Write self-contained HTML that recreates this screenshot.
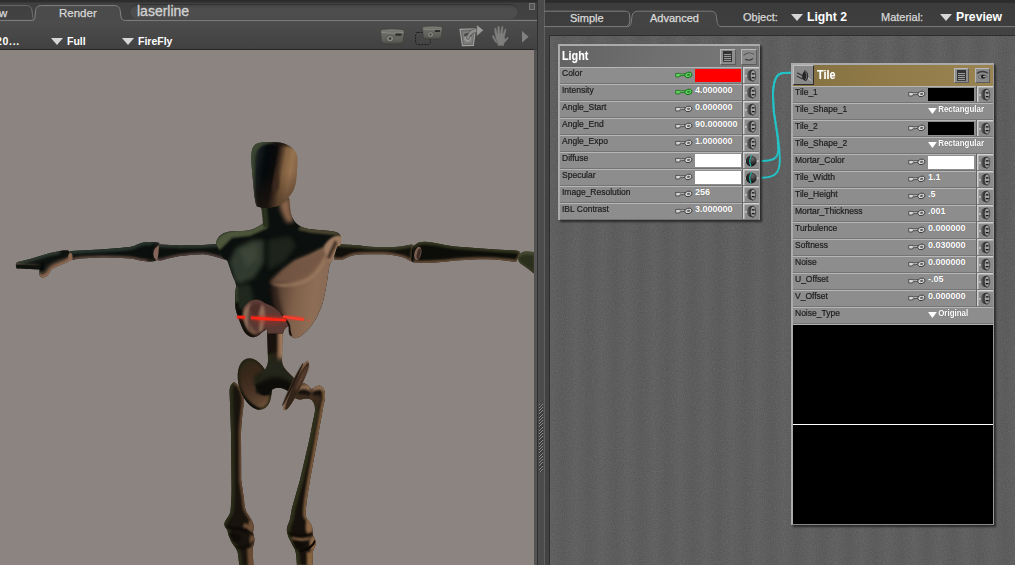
<!DOCTYPE html>
<html><head><meta charset="utf-8"><title>laserline</title>
<style>
html,body{margin:0;padding:0}
body{width:1015px;height:565px;overflow:hidden;background:#454545;position:relative;font-family:"Liberation Sans","DejaVu Sans",sans-serif;}
#left{position:absolute;left:0;top:0;width:538px;height:565px;background:#535353;overflow:hidden;border-right:1px solid #303030;box-sizing:border-box}
.hdr{position:absolute;left:0;top:0;width:538px;height:50px;background:linear-gradient(180deg,#2c2c2c 0px,#2e2e2e 2px,#404040 3px,#424242 20px,#4d4d4d 21px,#494949 30px,#424242 48px,#3e3e3e 49px)}
.topline{display:none}
.pill{position:absolute;left:130px;top:3.6px;width:388px;height:15.4px;border-radius:8px;background:linear-gradient(180deg,#424242 0%,#4e4e4e 35%,#4c4c4c 100%);box-shadow:inset 0 1px 1px #323232}
.doc{position:absolute;left:137px;top:3px;font-size:14px;color:#d2d2d2;-webkit-text-stroke:0.3px #d2d2d2}
.corner{position:absolute;left:529px;top:3px;width:4px;height:5px;border:1px solid #777;background:#555}
.tb{position:absolute;top:34.5px;color:#fff;font-weight:bold;font-size:10.5px;white-space:nowrap}
.tb.a{left:-4px;letter-spacing:0.7px}.tb.b{left:51px}.tb.c{left:122px}
.tri{display:inline-block;width:0;height:0;border-left:4px solid transparent;border-right:4px solid transparent;border-top:6px solid #fff;margin-right:2px;vertical-align:0px}
.tri.big{border-left-width:6px;border-right-width:6px;border-top-width:7px;border-top-color:#d6d6d6;margin-right:4px}
.render{position:absolute;left:0;top:49px;width:534.3px;height:516px;background:#8c8480;overflow:hidden;border-top:1px solid #262626;box-sizing:border-box}
#divider{position:absolute;left:538px;top:0;width:6px;height:565px;background:#4b4b4b}
.grip{position:absolute;left:1px;top:404px;width:4px;height:68px;background:repeating-linear-gradient(135deg,#8c8c8c 0 0.8px,#3c3c3c 0.8px 2.3px)}
#right{position:absolute;left:544px;top:0;width:471px;height:565px;background:linear-gradient(180deg,#2b2b2b 0px,#2d2d2d 2.4px,#3c3c3c 3.4px,#3e3e3e 26px,#444 27px,#424242 36px);overflow:hidden;box-shadow:inset 1px 0 0 #606060}
.olab,.mlab{position:absolute;top:10.6px;font-size:11px;color:#d8d8d8;-webkit-text-stroke:0.25px #d8d8d8}
.olab{left:199px}.mlab{left:337px}
.oval,.mval{position:absolute;top:9.8px;font-size:12.2px;font-weight:bold;color:#fff;white-space:nowrap}
.oval{left:247px}.mval{left:396px}
.canvas{position:absolute;left:5px;top:35px;width:466px;height:530px;background:#666666;border-left:1px solid #2e2e2e;border-top:1px solid #2e2e2e;box-sizing:border-box;background-image:repeating-linear-gradient(90deg,rgba(255,255,255,0.025) 0px,rgba(0,0,0,0.025) 13px,rgba(255,255,255,0.025) 26px)}
.noise{position:absolute;left:0;top:0;opacity:0.15}
.wires{position:absolute;left:-1px;top:-1px}
.node{position:absolute;margin-left:-550px;margin-top:-36px;background:#8d8d8d;box-shadow:2px 2px 2px rgba(0,0,0,0.55);border-top:2px solid #ababab;border-left:2px solid #ababab;border-right:1px solid #9a9a9a;border-bottom:1px solid #8a8a8a;box-sizing:border-box}
.light{border-bottom:none !important}
.ntitle{height:21px;position:relative;background:linear-gradient(100deg,#626262 0%,#707070 50%,#787878 100%);color:#fff;font-weight:bold;font-size:12px;line-height:20px;padding-left:2px;box-sizing:border-box;white-space:nowrap}
.tile .ntitle{height:20.5px;padding-left:24px;background:linear-gradient(100deg,#84703f 0%,#8f7a48 45%,#9a8552 100%)}
.nt{display:inline-block;transform:scaleX(0.9);transform-origin:left center;text-shadow:0 0 1px rgba(255,255,255,0.4)}
.btn{position:absolute;top:2.6px;width:16px;height:16px;background:#8e8e8e;border:1px solid #b8b8b8;border-right-color:#5c5c5c;border-bottom-color:#5c5c5c;box-sizing:border-box}
.tile .btn{top:2.8px;width:15px;height:15px}
.tile .btn.list{right:24px}.tile .btn.eye{right:3px}
.tile .btn.list svg{left:2.4px;top:1.2px}
.btn.list{right:23px}.btn.eye{right:2px;background:#8a8a8a}
.btn svg{position:absolute;left:0;top:0}
.btn.list svg{left:1.8px;top:1.6px}
.row{height:17px;position:relative;box-sizing:border-box;border-top:1px solid #b6b6b6;border-bottom:1px solid #747474;background:#8d8d8d;font-size:9px;color:#1c1c1c}
.lab{position:absolute;left:2.4px;top:0.5px;white-space:nowrap;transform:scaleX(0.945);transform-origin:left center;-webkit-text-stroke:0.2px #1c1c1c}
.key{position:absolute;left:114.6px;top:3.1px}
.val{position:absolute;left:135px;top:-0.2px;color:#fff;font-weight:bold;font-size:9px;text-shadow:0 0 1px rgba(60,60,60,0.6)}
.sw{position:absolute;left:135px;top:1px;width:46px;height:13px}
.plug{position:absolute;right:0;top:-1px}
.dd{position:absolute;left:135.2px;top:0.4px;color:#fff;font-weight:bold;white-space:nowrap;transform:scaleX(0.88);transform-origin:left center;text-shadow:0 0 1px rgba(60,60,60,0.6)}
.dd .tri{border-left-width:5.3px;border-right-width:5.3px;border-top-width:6.6px;margin-right:1.6px;vertical-align:-2px}
.prev{height:199.5px;background:#000;position:relative;border-top:1.5px solid #b0b0b0}
.wl{position:absolute;left:0;right:0;top:99px;height:1px;background:#fff}
.ticon{position:absolute;left:0;top:0;width:20.5px;height:19.6px;background:#8a8a8a;border-top:1px solid #bdbdbd;border-left:1px solid #bdbdbd;border-right:1.5px solid #2e2e2e;border-bottom:1.5px solid #2e2e2e;box-sizing:border-box}

.tabl{position:absolute;top:6.6px;font-size:11.5px;color:#d8d8d8;white-space:nowrap;-webkit-text-stroke:0.25px #d8d8d8}
.tabl.t0{left:-1px}
.tabl.t1{left:59px}
.rtabl{position:absolute;top:11.5px;font-size:11px;color:#dcdcdc;white-space:nowrap;-webkit-text-stroke:0.25px #dcdcdc}
.rtabl.s{left:26px}.rtabl.adv{left:106px}

.light .lab{top:-0.2px}
.tile .val{top:0.8px}
.light .key{top:2.6px}

</style></head>
<body>
<svg width="0" height="0" style="position:absolute"><defs>
<linearGradient id="gSock" x1="0" y1="0" x2="1" y2="0"><stop offset="0" stop-color="#7c7c7c"/><stop offset="0.4" stop-color="#444"/><stop offset="1" stop-color="#161616"/></linearGradient>
<radialGradient id="gBall" cx="0.62" cy="0.3" r="0.8"><stop offset="0" stop-color="#6a6a6a"/><stop offset="0.5" stop-color="#2c2c2c"/><stop offset="1" stop-color="#0c0c0c"/></radialGradient>
</defs></svg>
<div id="left">
  <div class="hdr">
    <div class="topline"></div>
    <div class="pill"></div>
    <svg class="tabs" width="538" height="24" viewBox="0 0 538 24" style="position:absolute;left:0;top:0">
      <path d="M0 5.6 L26 5.6 C30.5 5.6 31.6 8 32 11 L32.6 16 C32.9 18.6 33.2 19.8 34 20.4" fill="none" stroke="#6c6c6c" stroke-width="1"/>
      <path d="M33 20.9 C34.6 20.2 35 18 35.2 15 L35.6 10.6 C36 7.4 37.6 5.6 41.6 5.6 L114 5.6 C118.4 5.6 119.8 7.6 120.2 10.6 L120.8 16 C121.2 19 122.4 20.9 125.4 20.9 Z" fill="#4b4b4b"/>
      <path d="M0 20.4 L33 20.4 C34.6 20.2 35 18 35.2 15 L35.6 10.6 C36 7.4 37.6 5.6 41.6 5.6 L114 5.6 C118.4 5.6 119.8 7.6 120.2 10.6 L120.8 16 C121.2 19 122.4 20.4 125.4 20.4 L538 20.4" fill="none" stroke="#828282" stroke-width="1"/>
    </svg>
    <div class="tabl t0">w</div>
    <div class="tabl t1">Render</div>
    <div class="doc">laserline</div>
    <div class="corner"></div>
    <div class="tb a">20...</div>
    <div class="tb b"><b class="tri big"></b>Full</div>
    <div class="tb c"><b class="tri big"></b>FireFly</div>
    <svg class="icons" width="538" height="50" viewBox="0 0 538 50" style="position:absolute;left:0;top:0">
<defs>
  <linearGradient id="gCam" x1="0" y1="0" x2="0" y2="1"><stop offset="0" stop-color="#868780"/><stop offset="0.22" stop-color="#6c6d66"/><stop offset="0.75" stop-color="#5e5f59"/><stop offset="1" stop-color="#474843"/></linearGradient>
  <g id="cam">
    <path d="M1.6 3.2 C1.2 1.6 2.4 0.8 4 0.7 C8 0 16 0 20 0.7 C22 0.8 23.2 1.6 23 3.2 L22 11.6 C21.6 13.8 20.4 14.8 18.4 15 C14 15.6 10 15.6 5.6 15 C3.8 14.8 2.8 13.8 2.4 11.6 Z" fill="url(#gCam)" stroke="#3a3a36" stroke-width="0.6"/>
    <path d="M2.2 3.4 C8 4.6 17 4.6 22.6 3.4" fill="none" stroke="#9c9d96" stroke-width="0.8" opacity="0.7"/>
    <circle cx="10.2" cy="9.8" r="3.1" fill="#8d8e88" stroke="#4a4a46" stroke-width="0.7"/>
    <circle cx="10.2" cy="9.8" r="1.3" fill="#3a3a38"/>
    <rect x="15" y="4.6" width="5.4" height="2.4" rx="0.6" fill="#2c2c2a"/>
  </g>
</defs>
<g transform="translate(378.7 28.8) scale(1.115 1)"><use href="#cam"/></g>
<rect x="415.6" y="32.4" width="14.8" height="12.2" rx="2.4" fill="none" stroke="#151515" stroke-width="1" stroke-dasharray="1.6 1.3"/>
<g transform="translate(421 26) scale(0.93 0.87)"><use href="#cam"/></g>
<!-- export -->
<path d="M460 29.4 L475.4 28.8 L473.4 45.4 L462.4 45.6 Z" fill="#6c6c6a" stroke="#a2a2a0" stroke-width="1.1"/>
<path d="M462.4 31.4 L473.6 31 L472 43.6 L464 43.8 Z" fill="#7e7e7c"/>
<ellipse cx="467.6" cy="37.6" rx="3.4" ry="4.4" fill="#9a9a98"/>
<path d="M464 34.6 C466 32.6 470 32.6 471.6 34.8 L471 37 C469 35 466.6 35 464.4 37 Z" fill="#4a4a48"/>
<path d="M466.4 38.6 C467.6 31.6 472 28.4 477.6 28.4 L477.6 32.6 C473 32.6 470 34.4 468.8 39.6 Z" fill="#8e8e8c" stroke="#3a3a3a" stroke-width="0.5"/>
<path d="M476.6 24.4 L483.6 30.2 L476.6 36.4 Z" fill="#9a9a98" stroke="#3a3a3a" stroke-width="0.5"/>
<!-- hand -->
<g fill="#7e7e7c" stroke="#5a5a58" stroke-width="0.4">
<path d="M495.4 36 C494.6 33 494.2 30.6 494.4 28.6 C494.6 27.4 496 27.4 496.3 28.6 L497.4 34 L497.6 27 C497.6 25.6 499.4 25.6 499.6 27 L500.2 33.6 L501.4 26.8 C501.6 25.6 503.2 25.8 503.2 27.2 L502.8 34 L504.6 29.4 C505 28.2 506.4 28.6 506.2 30 L504.8 36.6 C504.6 38.6 504.8 39.4 506 38.4 L507.4 37.2 C508.2 36.6 509 37.4 508.4 38.2 C507 40.2 505.6 42 504 43.4 L504 45.8 L497.6 45.8 L497.6 43.6 C496.4 41.6 495.8 38.6 495.4 36 Z"/>
<path d="M492.2 36.4 C492 35.2 493.4 34.8 494 35.8 L496.4 40.4 L497.6 43.6 L496 43 C494.4 41 493 38.8 492.2 36.4 Z"/>
</g>
<path d="M522 31 L528.6 36.8 L522 42.8 Z" fill="#808080"/>
</svg>

  </div>
  <div class="render">
<svg class="fig" width="534" height="516" viewBox="0 49 534 516" style="position:absolute;left:0;top:-1px">
<defs>
  <filter id="b1" color-interpolation-filters="sRGB" x="-20%" y="-20%" width="140%" height="140%"><feGaussianBlur color-interpolation-filters="sRGB" stdDeviation="1"/></filter>
  <filter id="b2" color-interpolation-filters="sRGB" x="-20%" y="-20%" width="140%" height="140%"><feGaussianBlur color-interpolation-filters="sRGB" stdDeviation="2"/></filter>
  <filter id="b3" color-interpolation-filters="sRGB" x="-30%" y="-30%" width="160%" height="160%"><feGaussianBlur color-interpolation-filters="sRGB" stdDeviation="3.5"/></filter>
  <filter id="b5" color-interpolation-filters="sRGB" x="-30%" y="-30%" width="160%" height="160%"><feGaussianBlur color-interpolation-filters="sRGB" stdDeviation="5"/></filter>
  <filter id="b07" color-interpolation-filters="sRGB" x="-20%" y="-20%" width="140%" height="140%"><feGaussianBlur color-interpolation-filters="sRGB" stdDeviation="0.7"/></filter>
  <filter id="soft" color-interpolation-filters="sRGB" x="-5%" y="-5%" width="110%" height="110%"><feGaussianBlur color-interpolation-filters="sRGB" stdDeviation="0.45"/></filter>
  <linearGradient id="gHead" x1="251" y1="168" x2="298" y2="176" gradientUnits="userSpaceOnUse">
    <stop offset="0" stop-color="#2c3428"/><stop offset="0.14" stop-color="#10181a"/><stop offset="0.28" stop-color="#04090b"/><stop offset="0.47" stop-color="#0a0a0a"/><stop offset="0.56" stop-color="#3e2c20"/><stop offset="0.67" stop-color="#80603f"/><stop offset="0.82" stop-color="#96724f"/><stop offset="1" stop-color="#7e5e44"/>
  </linearGradient>
  <linearGradient id="gHeadB" x1="0" y1="172" x2="0" y2="208" gradientUnits="userSpaceOnUse">
    <stop offset="0" stop-color="#2a1c14" stop-opacity="0"/><stop offset="1" stop-color="#2a1c14" stop-opacity="0.55"/>
  </linearGradient>
  <linearGradient id="gArmL" x1="0" y1="243" x2="0" y2="262" gradientUnits="userSpaceOnUse">
    <stop offset="0" stop-color="#2c3424"/><stop offset="0.25" stop-color="#0e1410"/><stop offset="0.7" stop-color="#0d100d"/><stop offset="0.9" stop-color="#5a4535"/><stop offset="1" stop-color="#a07a62"/>
  </linearGradient>
  <linearGradient id="gArmR" x1="0" y1="242" x2="0" y2="263" gradientUnits="userSpaceOnUse">
    <stop offset="0" stop-color="#3f4430"/><stop offset="0.3" stop-color="#1a1e14"/><stop offset="0.7" stop-color="#0d0f0b"/><stop offset="0.9" stop-color="#4a3a2c"/><stop offset="1" stop-color="#9a7860"/>
  </linearGradient>
  <linearGradient id="gLegL" x1="229" y1="0" x2="246" y2="0" gradientUnits="userSpaceOnUse">
    <stop offset="0" stop-color="#2c3020"/><stop offset="0.35" stop-color="#15140e"/><stop offset="0.7" stop-color="#3a2a1e"/><stop offset="1" stop-color="#7a5a42"/>
  </linearGradient>
  <linearGradient id="gLegR" x1="0" y1="0" x2="1" y2="0.15">
    <stop offset="0" stop-color="#3a3a22"/><stop offset="0.3" stop-color="#14120c"/><stop offset="0.65" stop-color="#2a1c14"/><stop offset="1" stop-color="#8a6246"/>
  </linearGradient>
  <linearGradient id="gSpine" x1="267" y1="0" x2="283" y2="0" gradientUnits="userSpaceOnUse">
    <stop offset="0" stop-color="#2c2c1a"/><stop offset="0.35" stop-color="#242416"/><stop offset="0.55" stop-color="#2a2016"/><stop offset="0.72" stop-color="#7e5c44"/><stop offset="0.9" stop-color="#a07a5c"/><stop offset="1" stop-color="#7a5a44"/>
  </linearGradient>
  <linearGradient id="gLit" x1="272" y1="292" x2="328" y2="300" gradientUnits="userSpaceOnUse">
    <stop offset="0" stop-color="#3e2c24"/><stop offset="0.15" stop-color="#5e4536"/><stop offset="0.4" stop-color="#7e604a"/><stop offset="0.75" stop-color="#8e6e55"/><stop offset="0.93" stop-color="#886a56"/><stop offset="1" stop-color="#a07850"/>
  </linearGradient>
  <linearGradient id="gDiscL" x1="240" y1="362" x2="270" y2="406" gradientUnits="userSpaceOnUse">
    <stop offset="0" stop-color="#2a2818"/><stop offset="0.25" stop-color="#38271a"/><stop offset="0.6" stop-color="#4a3426"/><stop offset="0.85" stop-color="#5e4430"/><stop offset="1" stop-color="#80603f"/>
  </linearGradient>
  <clipPath id="cHead"><path id="pHead" d="M257 206.6 C255.5 204 254.6 198 254 192 L251.6 166 C250.6 154 251.5 147 256 144 C260 142 266 141.8 272 142 C279 142.2 284 143 288 145.2 C294 148.5 297.6 153 297.6 160 L297 172 C296.4 181 295.5 186 293.5 190 C291.5 194 289.5 196.5 287 199 C283.5 203 279.5 205.5 276 206.6 C270 208.3 262 208.6 257 206.6 Z"/></clipPath>
  <clipPath id="cTorso"><path id="pTorso" d="M216 244 C216.5 240 218 236.5 223 233.5 C227 231.5 232 231 238 231 C244 231 248 231 252 229.6 C256 228 260 226 263.5 223 L262.4 212 L261 207 L289 198 L290 208 C290.5 214 292 218.5 296 223 C299 226 303 228 309 229 C318 230 328 230.5 334 231.6 C339 232.8 341 235 341 238 L340.6 245 L337 246.6 C335.6 252 333 259 329.6 264.5 C328.6 270 327.8 276 327 282 C326 288 325 293 323.8 298 C322.8 303 321.5 307 319.6 311 C318 315 316 319 313.5 322.5 C311 326.5 308.5 329.5 305.6 332 C303 334.5 300.5 336.5 297.6 337.8 C294.5 338.8 291.6 337.6 290 335.6 C288.6 334 288.8 331 288.7 327 L286.6 327 C284.6 329 283.4 331 283 333.5 L267.2 333.5 L267 329 C265.6 329.8 264.4 330.6 263 331.6 C261.4 333 259.6 334.6 258 335.6 C256 337 253.6 337.4 251.5 337 C249 336.4 246.6 334.6 245 332.5 C243 329.6 241.4 326 240 322 C238.2 317.6 236.4 313 235.6 309 C235 303.6 235 299 235 295 C235 291.6 236.4 288 236 285 C235.4 281.4 234 279 232.6 276 C231 272 229.6 267 228 262.6 C227.4 260 225.4 259 223 258 Z"/></clipPath>
  <linearGradient id="gLaser" x1="237" y1="0" x2="312" y2="0" gradientUnits="userSpaceOnUse">
    <stop offset="0" stop-color="#ff2a18"/><stop offset="0.85" stop-color="#ff2a18"/><stop offset="1" stop-color="#ff2a18" stop-opacity="0"/>
  </linearGradient>
</defs>
<g filter="url(#soft)">
<!-- left arm -->
<defs><path id="upL" d="M155 247 C156.6 245.6 158 244.8 160 244.6 C167 244.8 174 245.2 180 245.4 C188 245.4 196 245.2 203 245 L218 244 L226 260 C217 257 210 254.8 203 254.2 C196 254.4 188 255 180 256 C175 256.8 170 258 166 259 C164 259.8 162 260.4 160 260.6 C157.6 260.4 155.6 259.4 155 258 C154.2 255 154.2 250 155 247 Z"/>
<clipPath id="c_upL"><use href="#upL"/></clipPath>
<mask id="mt_upL" maskUnits="userSpaceOnUse" x="0" y="230" width="540" height="60"><rect x="0" y="230" width="540" height="60" fill="#fff"/><use href="#upL" transform="translate(0 3)" fill="#000" filter="url(#b1)"/></mask>
<mask id="mb_upL" maskUnits="userSpaceOnUse" x="0" y="230" width="540" height="60"><rect x="0" y="230" width="540" height="60" fill="#fff"/><use href="#upL" transform="translate(0 -2.0)" fill="#000" filter="url(#b1)"/></mask></defs>
<g clip-path="url(#c_upL)">
  <rect x="0" y="230" width="540" height="60" fill="#0c100d"/>
  <rect x="0" y="230" width="540" height="60" fill="#2a342c" mask="url(#mt_upL)"/>
  <rect x="0" y="230" width="540" height="60" fill="#54403a" mask="url(#mb_upL)"/>
</g>
<path d="M158.8 244.6 C156 247 154.4 248.6 154 250 C153.2 252 153 254 153.4 256 C154 258 155 259.4 156.6 260.6 C158.4 258 159 250 158.8 244.6 Z" fill="#846558"/>
<defs><path id="foL" d="M69 253 C69.4 251.6 70 251 71 251 L100 249.4 L120 248 C126 247.4 130 247 134 246 C136.6 245 138 244.2 140 243.6 C143 242.4 145.6 242 148 242 C152 241.8 156 242 158.6 242.8 C159.6 243.4 159.4 244.2 158.6 245 C156 247 154.4 248.6 154 250 C153.2 252 153 254 153.4 256 C154 258 155 259.4 156.4 260.4 C154 261.2 151 261.6 148 261.4 C145 261.2 142.6 261 140 260.6 C136 259.6 133 259 130 258.6 C120 257.8 110 257.4 100 257.6 C93 257.8 86 258.2 80 258.6 C77 259 74.6 259.6 72.4 260 C70.4 260.2 69.4 259.4 69 258 Z"/>
<clipPath id="c_foL"><use href="#foL"/></clipPath>
<mask id="mt_foL" maskUnits="userSpaceOnUse" x="0" y="230" width="540" height="60"><rect x="0" y="230" width="540" height="60" fill="#fff"/><use href="#foL" transform="translate(0 3.2)" fill="#000" filter="url(#b1)"/></mask>
<mask id="mb_foL" maskUnits="userSpaceOnUse" x="0" y="230" width="540" height="60"><rect x="0" y="230" width="540" height="60" fill="#fff"/><use href="#foL" transform="translate(0 -2.1)" fill="#000" filter="url(#b1)"/></mask></defs>
<g clip-path="url(#c_foL)">
  <rect x="0" y="230" width="540" height="60" fill="#0b0f0d"/>
  <rect x="0" y="230" width="540" height="60" fill="#27332c" mask="url(#mt_foL)"/>
  <rect x="0" y="230" width="540" height="60" fill="#5e483c" mask="url(#mb_foL)"/>
  <path d="M146 262 C150 256 152 250 152.4 243 L160 243 L158 262 Z" fill="#0a0c0a" filter="url(#b1)" opacity="0.7"/>
</g>
<defs><path id="haL" d="M69 251.4 C68 250.6 67.6 250.6 67 250.6 C65 250.6 62.6 250.6 60 251 C56.6 251.6 53.4 252.2 50 253 C46.6 254 43.4 255 40 256 L30 259 L20 261.6 C18 262 16.8 262.4 16.4 263 C15.8 264 15.8 265 16 266 C16.2 267.4 16.6 268.2 17 268.6 C21 269 26 269 30 269 C33.4 269.2 36.6 269.4 40 269.4 C39.4 270.6 39 271.8 39 273 C39 274.6 40 276.2 41 277 C42 277.8 43 277.8 44 277.6 C45.6 277 47 276.2 48 275 C49.2 273.4 50 271.6 51 270 C53 268.4 55.6 267.2 58 266 C61.6 264.4 65.4 263 69 261.4 C70 258 70 254.4 69 251.4 Z"/>
<clipPath id="c_haL"><use href="#haL"/></clipPath>
<mask id="mt_haL" maskUnits="userSpaceOnUse" x="0" y="230" width="540" height="60"><rect x="0" y="230" width="540" height="60" fill="#fff"/><use href="#haL" transform="translate(0.8 3)" fill="#000" filter="url(#b1)"/></mask>
<mask id="mb_haL" maskUnits="userSpaceOnUse" x="0" y="230" width="540" height="60"><rect x="0" y="230" width="540" height="60" fill="#fff"/><use href="#haL" transform="translate(-1.8 -3.0)" fill="#000" filter="url(#b2)"/></mask></defs>
<g clip-path="url(#c_haL)">
  <rect x="0" y="230" width="540" height="60" fill="#0d120f"/>
  <rect x="0" y="230" width="540" height="60" fill="#2c362e" mask="url(#mt_haL)"/>
  <rect x="0" y="230" width="540" height="60" fill="#9a7258" mask="url(#mb_haL)"/>
  <path d="M14 264.6 L41 265.4 L41 271 L14 271 Z" fill="#0d120f" filter="url(#b07)"/>
  <path d="M60 249 L71 249 L71 256.6 L60 258 Z" fill="#0d120f" filter="url(#b1)"/>
  <path d="M42.6 262 L43.8 262 L43.4 270 L40 270 Z" fill="#060806" filter="url(#soft)"/>
</g>
<ellipse cx="70.4" cy="257" rx="2.2" ry="4" fill="#8a6650" filter="url(#b07)"/>
<!-- right arm -->
<defs><path id="upR" d="M334 244 L345 244.4 C349 244.6 352 244.8 355 245 C358.6 245.4 362 245.8 365 246.2 C368.4 246.6 371.6 246.9 375 247 L387 247 C392 246.9 397 246.7 401 246.4 C404 246 406.6 245.4 409 245 C410.6 244.8 412 244.8 413 245 C413.6 245.6 413.6 246.4 413.4 247 C412.4 249.6 411.4 252 411 255 C410.8 257.2 411 259.4 411.6 261.4 C409.4 260.6 407 259.2 405 258 C401.6 257 398.4 256.2 395 255.6 C391.6 255 388.4 254.5 385 254.2 L365 254.2 C361.6 254.4 358.4 254.6 355 255 C352 255.6 349.4 256.4 347 257.4 C345 258.4 343 259.4 341 260 L334 260 Z"/>
<clipPath id="c_upR"><use href="#upR"/></clipPath>
<mask id="mt_upR" maskUnits="userSpaceOnUse" x="0" y="230" width="540" height="60"><rect x="0" y="230" width="540" height="60" fill="#fff"/><use href="#upR" transform="translate(0 2.8)" fill="#000" filter="url(#b1)"/></mask>
<mask id="mb_upR" maskUnits="userSpaceOnUse" x="0" y="230" width="540" height="60"><rect x="0" y="230" width="540" height="60" fill="#fff"/><use href="#upR" transform="translate(0 -2.2)" fill="#000" filter="url(#b1)"/></mask></defs>
<g clip-path="url(#c_upR)">
  <rect x="0" y="230" width="540" height="60" fill="#100f0a"/>
  <rect x="0" y="230" width="540" height="60" fill="#3a3b25" mask="url(#mt_upR)"/>
  <rect x="0" y="230" width="540" height="60" fill="#6a503c" mask="url(#mb_upR)"/>
</g>
<defs><path id="foR" d="M412 250 C412.6 248 413.6 246.4 415 245 C416.2 243.8 417.6 243 419 242.6 C421 242 423 241.8 425 241.8 C428.4 242 431.6 242.4 435 243 L445 245 C448.4 245.6 451.6 246.1 455 246.4 L475 248 L495 249.4 L515 250.6 C516.6 250.8 518 251 519 251.4 C520 252 520.4 253 520 254 L516 262 C512.4 261.4 508.6 261 505 260.6 C501.6 260.2 498.4 259.8 495 259.6 C488.4 259.4 481.6 259.3 475 259.4 C468.4 259.6 461.6 260 455 260.6 C449.6 261.2 444.4 261.8 439 262.2 C434.4 262.6 429.6 263 425 263 C421.6 263 418.4 262.9 415 262.6 C413.6 262.4 412.4 261.8 411.6 261 C411.2 257.4 411.4 253.6 412 250 Z"/>
<clipPath id="c_foR"><use href="#foR"/></clipPath>
<mask id="mt_foR" maskUnits="userSpaceOnUse" x="0" y="230" width="540" height="60"><rect x="0" y="230" width="540" height="60" fill="#fff"/><use href="#foR" transform="translate(0 2.6)" fill="#000" filter="url(#b1)"/></mask>
<mask id="mb_foR" maskUnits="userSpaceOnUse" x="0" y="230" width="540" height="60"><rect x="0" y="230" width="540" height="60" fill="#fff"/><use href="#foR" transform="translate(0 -2.2)" fill="#000" filter="url(#b1)"/></mask></defs>
<g clip-path="url(#c_foR)">
  <rect x="0" y="230" width="540" height="60" fill="#0c0d09"/>
  <rect x="0" y="230" width="540" height="60" fill="#33351f" mask="url(#mt_foR)"/>
  <rect x="0" y="230" width="540" height="60" fill="#6a503a" mask="url(#mb_foR)"/>
  <ellipse cx="417.8" cy="253.4" rx="3.4" ry="6.8" fill="#7a5e52" transform="rotate(14 417.8 253.4)"/>
  <ellipse cx="418.8" cy="253.8" rx="1.8" ry="5.4" fill="#3a2a22" transform="rotate(14 418.8 253.8)" filter="url(#soft)"/>
  <path d="M411 246 C413 243 415 242 417 241.6 C414.6 244 413.4 248 413 252 C412.6 256 413 260 414 263 L411 263 Z" fill="#090a07" filter="url(#soft)"/>
</g>
<defs><path id="haR" d="M518 257 C518.8 255.4 519.8 254 521 253 C522.2 252.2 523.6 251.8 525 251.6 C528 251.4 531 251.6 534 252 L534 273.4 C531.6 271.6 529.4 269.8 527 268 C524.6 266.4 522 264.8 520 263 C518.6 261.4 518 259 518 257 Z"/>
<clipPath id="c_haR"><use href="#haR"/></clipPath>
<mask id="mt_haR" maskUnits="userSpaceOnUse" x="0" y="230" width="540" height="60"><rect x="0" y="230" width="540" height="60" fill="#fff"/><use href="#haR" transform="translate(0 3)" fill="#000" filter="url(#b1)"/></mask>
<mask id="mb_haR" maskUnits="userSpaceOnUse" x="0" y="230" width="540" height="60"><rect x="0" y="230" width="540" height="60" fill="#fff"/><use href="#haR" transform="translate(0 -2)" fill="#000" filter="url(#b1)"/></mask></defs>
<g clip-path="url(#c_haR)">
  <rect x="0" y="230" width="540" height="60" fill="#2a2e1c"/>
  <rect x="0" y="230" width="540" height="60" fill="#454a30" mask="url(#mt_haR)"/>
  <rect x="0" y="230" width="540" height="60" fill="#3a3a26" mask="url(#mb_haR)"/>
</g>
<!-- legs -->
<defs><path id="legL" d="M234 382 C231 384 229.6 387 229.6 391 C229.8 400 230.6 415 231 433 L231.6 490 C231.6 498 231 506 230.4 512 C229 517 224.6 520 224.4 524 C224.6 527 226 528.4 227.4 530 C228 533 228.6 535.6 229.8 538 C231 541.6 233 544.6 235 547 C236.4 549 237.6 551 238 554 L239.4 566 L253.4 566 L252.6 548 C253.6 545 254.6 542 254.4 538.6 C254.2 536 253 534.4 253 532 C253.6 529 254 526 253 523 C251.6 519 248 515 246 511 C244.6 507 244.2 503 244 499 L241.2 480 L241 433 C241.6 420 243 410 244 402 C244 394 241 386 234 382 Z"/>
<path id="legR" d="M294.2 391.5 C295.4 389 296.6 387.2 298 386 C300 384.2 302.4 383.4 304.5 383.5 C306.4 383.8 307.6 385 308.5 386 C309.6 387.6 310.6 388.8 311.7 389 C313 388.8 314.4 387.4 315.7 386.7 C317.2 386 319 385.6 320.5 386 C322.6 386.8 324 388.6 324.5 390.7 C325 393 325.2 395.6 325 398 C324.8 400 324.4 402 323.7 404 C323.2 407 322.6 410 322 414 L319.7 426.5 L318.6 433 L310 480 C308.4 490 306.6 500 306 508 C305.6 512 305.6 515 306.4 518 C308 521 311 523 312 526.6 C312.6 530 312.6 533 313.2 536 C314.4 538.6 316 540.6 315.8 543.4 C315.4 546.6 313.4 548.6 313 551.6 L312.4 566 L297 566 C296.6 560 296.4 554 295 549.6 C293.6 546.6 292 544.6 291 542 C289.6 539 288 537 287.6 534 C287 531.6 286.6 530 287 528 C287.6 525 289 522.6 289.8 520 C290.6 516 291.4 512 292 508 L300 480 L309.3 440 L312.5 423.4 C313.6 418 314.8 414 315 410.6 C315 407 314.8 405 314 403.4 C313 401 312 400 311 399.4 C309.4 398.6 307.6 398.4 306 398.6 C304 399 301.6 399.6 299.7 399.4 C298 399.2 296.4 398.8 295 398 Z"/></defs>
<clipPath id="cLegL"><use href="#legL"/></clipPath>
<clipPath id="cLegR"><use href="#legR"/></clipPath>
<mask id="mLegL" maskUnits="userSpaceOnUse" x="215" y="375" width="50" height="195"><rect x="215" y="375" width="50" height="195" fill="#fff"/><use href="#legL" transform="translate(3.4 0)" fill="#000" filter="url(#b1)"/></mask>
<mask id="mLegLr" maskUnits="userSpaceOnUse" x="215" y="375" width="50" height="195"><rect x="215" y="375" width="50" height="195" fill="#fff"/><use href="#legL" transform="translate(-2.2 0)" fill="#000" filter="url(#b1)"/></mask>
<mask id="mLegR" maskUnits="userSpaceOnUse" x="280" y="375" width="50" height="195"><rect x="280" y="375" width="50" height="195" fill="#fff"/><use href="#legR" transform="translate(3.6 0.6)" fill="#000" filter="url(#b1)"/></mask>
<mask id="mLegRr" maskUnits="userSpaceOnUse" x="280" y="375" width="50" height="195"><rect x="280" y="375" width="50" height="195" fill="#fff"/><use href="#legR" transform="translate(-2.8 -0.6)" fill="#000" filter="url(#b1)"/></mask>
<g clip-path="url(#cLegL)">
  <rect x="215" y="375" width="50" height="195" fill="#18130d"/>
  <rect x="215" y="375" width="50" height="195" fill="#2a2b19" mask="url(#mLegL)"/>
  <rect x="215" y="375" width="50" height="195" fill="#664a33" mask="url(#mLegLr)"/>
  <ellipse cx="250.6" cy="527" rx="2.6" ry="7" fill="#6e5038" filter="url(#b1)"/>
  <ellipse cx="252" cy="540" rx="2.4" ry="6" fill="#6a4c34" filter="url(#b1)"/>
  <path d="M247 548 L254 548 L254 566 L248 566 Z" fill="#6a4c34" filter="url(#b1)"/>
  <!-- knee details -->
  <path d="M226 524 C230 527.4 236 528 240 527 C246 529 250 531 254 533.6 L254 536 C249 533.4 244 531.6 239.6 530.4 C234 531 229 529.6 226 527 Z" fill="#0c0906" filter="url(#b1)"/>
  <path d="M244 523 C248 524 252 527 253.4 531 C250 529.6 247 528 243 527.4 Z" fill="#70523a" filter="url(#b1)"/>
  <path d="M229 532 C233 533 238 533.6 241 536 C242 540 238 543 233.6 542 C231 539 229.6 536 229 532 Z" fill="#0e0b08" filter="url(#b1)"/>
  <path d="M234 545 C240 547.6 248 546 254 540.6 L254.4 543 C249 548.6 240 550 235.6 548 Z" fill="#0e0a07" filter="url(#b1)" opacity="0.8"/>
</g>
<g clip-path="url(#cLegR)">
  <rect x="280" y="375" width="50" height="195" fill="#15100b"/>
  <rect x="280" y="375" width="50" height="195" fill="#2f301b" mask="url(#mLegR)"/>
  <rect x="280" y="375" width="50" height="195" fill="#7a5a3c" mask="url(#mLegRr)"/>
  <!-- trochanter / neck shading -->
  <path d="M293 392 L298 385 L326 384 L326 392 C320 389 316 390 312 392 C308 391 304 388 300 390 Z" fill="#8a6a50" filter="url(#b1)"/>
  <path d="M294 395 C300 393 306 394 311 396 C316 394 320 395 322 398 L318 408 L313 401 L295 400 Z" fill="#3a2a1e" filter="url(#b1)"/>
  <path d="M310 386 L313 386 L313 400 L310 400 Z" fill="#4a3628" filter="url(#b1)" opacity="0.8"/>
  <ellipse cx="309" cy="527" rx="3.4" ry="8" fill="#8a6646" filter="url(#b1)"/>
  <ellipse cx="312.4" cy="543" rx="3" ry="6.4" fill="#8a6646" filter="url(#b1)"/>
  <path d="M306.6 552 L313 552 L313 566 L307 566 Z" fill="#86623f" filter="url(#b1)"/>
  <!-- knee details -->
  <path d="M288 531 C292 534.6 298 535.6 304 534.6 C308 534 311 533 313.4 531.6 L313.6 535 C310 537 305 538 300 537.8 C295 537.6 290.6 536 288 534 Z" fill="#0c0805" filter="url(#b1)"/>
  <path d="M292 536.6 C297 538.8 304 538.8 310 536.8 L310 539.6 C304 541.4 297 541.4 292.6 539.6 Z" fill="#9a7250" filter="url(#b1)" opacity="0.85"/>
  <path d="M293 540 C297 541.6 302 542.4 305 545 C304 549 299 550.6 296 549 C294.4 546 293.4 543 293 540 Z" fill="#0f0b08" filter="url(#b1)"/>
  <path d="M315.6 541 C315 546 308 551.4 299.6 552 L299.4 550 C307 549 312.6 545 314.2 540 Z" fill="#0c0805" filter="url(#soft)"/>
</g>
<!-- left disc -->
<clipPath id="cDiscL"><ellipse cx="254.6" cy="384" rx="15.6" ry="26.5" transform="rotate(-18 254.6 384)"/></clipPath>
<g clip-path="url(#cDiscL)">
  <rect x="230" y="350" width="50" height="70" fill="url(#gDiscL)"/>
  <ellipse cx="254.6" cy="384" rx="15.2" ry="26" transform="rotate(-18 254.6 384)" fill="none" stroke="#1e2012" stroke-width="2.6" filter="url(#b1)"/>
  <path d="M236 380 C240 394 250 404 262 410 L256 412 C244 406 236 394 234 382 Z" fill="#0c0c07" filter="url(#b1)"/>
  <path d="M254 376 C258 372 264 370 270 370 L276 388 C270 390 262 392 258 390 C254 386 253 380 254 376 Z" fill="#1e1f13" filter="url(#b2)"/>
  <path d="M256 388 C262 390 268 390 274 386 L274 394 C268 396 260 396 256 392 Z" fill="#0e0d08" filter="url(#b1)"/>
</g>
<!-- spine & pelvis Y -->
<clipPath id="cY"><path d="M267.2 327 C270 329 274 330 278 329.6 C281 329 284 328 286.6 326.6 C284.4 329 283.2 331 283 333.5 L282 360 C282.2 365 284 368 289 373 L295 379 L288 391 C284 388 278 386.6 272.6 389 C271 393 267 396 263 395 C259 393 256 389 255 384 C259 380 263 374 266 368 C267.6 365 268 363 268 360 L267.2 333 Z"/></clipPath>
<g clip-path="url(#cY)">
  <rect x="250" y="320" width="50" height="80" fill="url(#gSpine)"/>
  <path d="M264 322 L276.6 322 L276 352 L264 356 Z" fill="#18110c" filter="url(#b1)"/>
  <path d="M250 372 L268 360 L284 358 L300 372 L300 400 L250 400 Z" fill="#24251a" filter="url(#b2)"/>
  <path d="M250 386 C258 384 264 380 270 378 C278 376 286 378 296 386 L296 400 L250 400 Z" fill="#0d0c08" filter="url(#b2)"/>
  <path d="M274 344 L284 344 L284 366 L292 376 L286 380 C280 372 275 364 274 344 Z" fill="#15120c" filter="url(#b1)" opacity="0.0"/>
</g>
<!-- right disc -->
<g transform="rotate(26 296 385.5)">
  <ellipse cx="296" cy="385.5" rx="4.9" ry="27.4" fill="#7a5a40"/>
  <ellipse cx="297.4" cy="385.8" rx="3.5" ry="26" fill="#33241a"/>
  <ellipse cx="298" cy="376" rx="2" ry="14" fill="#5a4030" filter="url(#b1)"/>
  <ellipse cx="292.6" cy="386" rx="1.2" ry="24" fill="#1a140e" filter="url(#soft)"/>
</g>
<!-- torso -->
<g clip-path="url(#cTorso)">
  <rect x="210" y="195" width="140" height="150" fill="#0b0f0d"/>
  <!-- left shoulder/trap top band -->
  <path d="M214 247 C215 238 222 231 236 230 L252 229 L264 222 L268 228 L250 236 L232 238 L220 250 Z" fill="#4c543a" filter="url(#b1)"/>
  <!-- left pec -->
  <path d="M229 262 L236 248 L252 240 L264 240 L264 262 L254 278 L240 284 L235 282 Z" fill="#303a2e" filter="url(#b2)"/>
  <path d="M240 250 L256 244 L258 258 L246 268 Z" fill="#3c4638" filter="url(#b2)"/>
  <!-- right pec -->
  <path d="M268 240 L290 236 L296 246 L284 262 L268 270 Z" fill="#1e241c" filter="url(#b2)"/>
  <!-- left abdomen -->
  <path d="M235 286 L250 284 L254 300 L246 312 L240 322 L236 308 Z" fill="#20281e" filter="url(#b2)"/>
  <path d="M234.6 286 L237.6 286 L238 300 L241 320 L238.6 320 L235.6 306 Z" fill="#3a4230" filter="url(#b1)"/>
  <!-- right shoulder top band -->
  <path d="M300 226 L312 228.6 L336 231 L341 236 L334 235 L312 233 L298 230 Z" fill="#4a4630" filter="url(#b1)"/>
  <!-- tan lit -->
  <path d="M326 246.4 L332 238 L344 234 L344 262 L332 266 L330 300 L316 326 L298 342 L284 342 L279 316 L274.6 304 L273.4 296 L272.7 286 L269.4 282.4 L282 270.2 L294.6 260.7 L310 254.4 Z" fill="url(#gLit)" filter="url(#b1)"/>
  <!-- pec lens (slightly darker) -->
  <path d="M269.4 282.4 L282 270.2 L294.6 260.7 L310 254.4 L326 246.4 L326 254 C322 263 316 270 310 275 C300 282 284 284 269.4 282.4 Z" fill="#735644" filter="url(#b2)" opacity="0.9"/>
  <path d="M272 283 C284 285.6 300 283 310 276 C316 271 321 264 324.6 256 L326 262 C322 270 316 277 310 281 C300 287 284 288 273 286 Z" fill="#98785e" filter="url(#b1)" opacity="0.8"/>
  <!-- boundary darkening along left of abdomen -->
  <path d="M270 284 L276 286 L279 300 L284 318 L276 318 L272 300 Z" fill="#2a1c16" filter="url(#b2)" opacity="0.85"/>
  <!-- right deltoid -->
  <path d="M324 246 C327 241 331 237.6 336 236.2 C340 236.6 341.4 240 341 244 L340.6 259 C336 262 331 262.6 328 261 C326 256 324 251 324 246 Z" fill="#9c7a62" filter="url(#b1)"/>
  <path d="M335 240 C332.6 245 330 251 327 257 L329.6 259.6 C332 254 335 248 337.4 243 Z" fill="#3e2e22" filter="url(#b1)"/>
  <!-- opening interior -->
  <path d="M238.8 319 C239.6 315 240.8 312 242.5 310 C244 306.6 245.6 304.4 247.8 302.7 C250.4 300.6 253.4 299.6 256.8 299.6 C259.6 299.8 262 301.2 264.3 302.7 C267 304 269.4 305 271.7 306 C275 308 277.6 310.4 280 313 C282.2 315.4 284 318 285.5 320.8 C287 323 288 325 288.7 327 L289 334 L283 340 L267 340 L250 340 L240 326 Z" fill="#5a3a34"/>
  <path d="M241.6 318 C243 310.6 246.6 305 251 303 C248.6 309 247.6 318 248.6 327 L251 335 L246 333 Z" fill="#8c6a56" filter="url(#b1)"/>
  <path d="M250 308 C253 303.4 258 303 261 306 C259.6 311 257 314 255.6 320 C253.6 316 251 312 250 308 Z" fill="#4e2e28" filter="url(#b1)"/>
  <path d="M262 304 C265 308 265.6 314 264.8 320 C264 325 262.6 329 262.4 332 L258.6 333 C260 327 259.6 320 259 314 C259.8 310 261 306 262 304 Z" fill="#8e6c5a" filter="url(#b1)"/>
  <path d="M249.6 322 C251 326 252.6 329 255 331 L258 333 L257 337 L250 337 Z" fill="#745444" filter="url(#b1)"/>
  <!-- lower dark of left lobe -->
  <path d="M243 326 C246 331 250 334 254 334.6 C258 334.4 261 332.4 264 330 L266.8 329.4 L266 336 L252 340 L242 334 Z" fill="#2a1c14" filter="url(#b1)"/>
  <!-- dark rim on left lobe -->
  <path d="M234.6 303 C235.4 311 237.6 318 240.2 324 C242.6 330 245.6 335 251.5 338 L256 337 C249 334 246 328.6 244 323 C242.4 318.6 241.8 314 243 309.4 C240.4 311 238.8 308 238.8 302 Z" fill="#0c0c08" filter="url(#b1)"/>
  <!-- right lobe inner dark edge -->
  <path d="M280 313 C282.2 315.4 284 318 285.5 320.8 C287 323 288 325 288.7 327 C288.8 331 288.6 334 290 335.6 L292.4 336 C290.6 333 290.6 329 290.2 325.6 C288.6 321 285 316 280 313 Z" fill="#1a120e" filter="url(#soft)"/>
  <!-- red glow -->
  <ellipse cx="270" cy="320" rx="16" ry="5" fill="#c0281c" opacity="0.35" filter="url(#b2)"/>
</g>
<!-- spine top inside opening -->
<!-- neck -->
<clipPath id="cNeck"><path d="M261 205 L262.2 218 C262.8 224 263.4 228 264 232 L306 232 C301 229 296 225 293 220 C291 215 290.4 208 289.6 196 Z"/></clipPath>
<g clip-path="url(#cNeck)">
<path d="M279 203 L290 196 L291 209 C291.6 214 292.6 217 295 221 L287 223 C283 216 280 210 279 203 Z" fill="#866248" filter="url(#b2)"/>
<path d="M261 207 L267 206 L269 226 L263 228 Z" fill="#2c301e" filter="url(#b1)"/>
</g>
<!-- head -->
<g clip-path="url(#cHead)">
  <rect x="245" y="138" width="60" height="75" fill="url(#gHead)"/>
  <path d="M250 170 L251 146 L260 140 L284 141 L272 143.6 C261 144 255 149 254.6 160 L255 196 L258 209 L252 208 Z" fill="#3c4632" filter="url(#b1)"/>
  <path d="M272 140 L300 144 L298 150 C292 146 284 145 274 146 Z" fill="#1a1410" filter="url(#b1)" opacity="0.8"/>
  <rect x="245" y="172" width="60" height="40" fill="url(#gHeadB)"/>
  <path d="M276.6 164 C277.6 170 279.4 178 279 186 C278.4 190 276 192 274 193 L272 186 C274 180 275 172 276.6 164 Z" fill="#3a281e" filter="url(#b1)" opacity="0.85"/>
</g>
<!-- laser -->
<g filter="url(#b1)" opacity="0.55">
  <path d="M237 317 L245 317.4 M251 317.8 L286 320.2 M283 316.6 L304 319.6" stroke="#ff3020" stroke-width="4" fill="none"/>
</g>
<path d="M237 317 L245 317.4" stroke="#ff2414" stroke-width="2.6" fill="none"/>
<path d="M251 317.8 L286 320.2" stroke="#ff2414" stroke-width="2.6" fill="none"/>
<path d="M283 316.6 L304 319.6" stroke="#ff3c2c" stroke-width="2.3" fill="none"/>
<circle cx="308.6" cy="320.4" r="1.2" fill="#e04838" opacity="0.6"/>
</g>
</svg>

  </div>
</div>
<div id="divider"><div class="grip"></div></div>
<div id="right">
  <svg class="tabs" width="471" height="30" viewBox="544 0 471 30" style="position:absolute;left:0;top:0">
    <path d="M544 11.2 L624 11.2 C628 11.2 629.4 12.6 629.6 15 L629.8 20 C629.8 23 629 25 627 26.4" fill="none" stroke="#808080" stroke-width="1"/>
    <path d="M627.6 27 C630.4 26.2 631 24 631.4 21 L632 16.4 C632.6 12.6 634.6 11.2 638.6 11.2 L710 11.2 C714.4 11.2 716 12.8 716.4 16.4 L717 21 C717.6 25 719 27 722 27 Z" fill="#444"/>
    <path d="M544 26.6 L627.6 26.6 C630.4 26.2 631 24 631.4 21 L632 16.4 C632.6 12.6 634.6 11.2 638.6 11.2 L710 11.2 C714.4 11.2 716 12.8 716.4 16.4 L717 21 C717.6 25 719 26.6 722 26.6 L1015 26.6" fill="none" stroke="#7c7c7c" stroke-width="1"/>
  </svg>
  <div class="rtabl s">Simple</div>
  <div class="rtabl adv">Advanced</div>
  <div class="olab">Object:</div><div class="oval"><b class="tri big"></b>Light 2</div>
  <div class="mlab">Material:</div><div class="mval"><b class="tri big"></b>Preview</div>
  <div class="canvas">
    <svg class="noise" width="466" height="530"><filter id="nz" x="0" y="0" width="100%" height="100%"><feTurbulence type="fractalNoise" baseFrequency="0.9" numOctaves="2" seed="3"/><feColorMatrix type="matrix" values="0 0 0 0 0  0 0 0 0 0  0 0 0 0 0  1.6 0 0 0 -0.3"/></filter><rect width="466" height="530" filter="url(#nz)"/></svg>
    <svg class="wires" width="466" height="530" viewBox="549 35 466 530">
      <path d="M791.4 72.8 L783 73 C776.4 73.4 773.6 80 773.1 92 C772.8 104 774 116 776 126 C777.6 134 778.2 142 778.2 150 C778.2 157.6 774 161 761.6 161" fill="none" stroke="#22c2c6" stroke-width="1.9"/>
      <path d="M791.4 72.8 L783 73 C776.4 73.4 773.6 80 773.1 92 C772.8 104 774 116 776 126 C778 136 779.8 146 779.8 160 C779.8 172 776 177.8 761.6 177.8" fill="none" stroke="#22c2c6" stroke-width="1.9"/>
    </svg>
<div class="node light" style="left:558px;top:44px;width:202px">
<div class="ntitle"><span class="nt">Light</span><span class="btn list"><svg width="9" height="11" viewBox="0 0 9 11"><rect width="9" height="11" fill="#333"/><path d="M1 3.6H8M1 5.6H8M1 7.6H8M1 9.6H8" stroke="#a4a4a4" stroke-width="1"/></svg></span><span class="btn eye"><svg width="14" height="14" viewBox="0 0 14 14"><path d="M1.6 5.4 C4 2.6 9.4 2.2 12 4.4" fill="none" stroke="#5a5a5a" stroke-width="1.1"/><path d="M3.2 9 C5.4 10.8 9 10.6 11 8.4" fill="none" stroke="#3e3e3e" stroke-width="1.3"/></svg></span></div>
<div class="row">
<span class="lab">Color</span>
<svg class="key" width="18" height="8" viewBox="0 0 18 8"><path d="M0.6 2.5 L4.6 2.3 L4.8 3 L10 2.7 L10.2 4.4 L4.9 4.8 L4.6 5.9 L0.8 6 Z" fill="#5fd25f" stroke="#1d6a1d" stroke-width="0.8" stroke-linejoin="round"/><ellipse cx="13.4" cy="3.9" rx="3.7" ry="2.7" transform="rotate(-14 13.4 3.9)" fill="#5fd25f" stroke="#1d6a1d" stroke-width="0.9"/><ellipse cx="13.6" cy="3.9" rx="1.7" ry="1.1" transform="rotate(-14 13.6 3.9)" fill="#2f8a2f"/></svg>
<span class="sw" style="background:#ff0000"></span>
<svg class="plug" width="17" height="16" viewBox="0 0 17 16"><rect x="0" y="0" width="1" height="16" fill="#5e5e5e"/><rect x="1" y="0" width="16" height="16" fill="#8b8b8b"/><path d="M1.7 16 L1.7 0.8 L17 0.8" fill="none" stroke="#d2d2d2" stroke-width="1.5"/><path d="M10.8 2.8 C6.6 3 4.6 5.6 4.6 8.6 C4.6 11.6 6.6 14.2 10.8 14.4 Z" fill="url(#gSock)"/><ellipse cx="11" cy="8.6" rx="2.7" ry="5.5" fill="#a0a0a0" stroke="#2a2a2a" stroke-width="0.75"/><rect x="9.8" y="6.2" width="2.8" height="1.3" fill="#111"/><rect x="9.8" y="10" width="2.8" height="1.3" fill="#111"/><rect x="3.2" y="8.2" width="1.5" height="1.5" fill="#d8d8d8"/></svg>
</div>
<div class="row">
<span class="lab">Intensity</span>
<svg class="key" width="18" height="8" viewBox="0 0 18 8"><path d="M0.6 2.5 L4.6 2.3 L4.8 3 L10 2.7 L10.2 4.4 L4.9 4.8 L4.6 5.9 L0.8 6 Z" fill="#5fd25f" stroke="#1d6a1d" stroke-width="0.8" stroke-linejoin="round"/><ellipse cx="13.4" cy="3.9" rx="3.7" ry="2.7" transform="rotate(-14 13.4 3.9)" fill="#5fd25f" stroke="#1d6a1d" stroke-width="0.9"/><ellipse cx="13.6" cy="3.9" rx="1.7" ry="1.1" transform="rotate(-14 13.6 3.9)" fill="#2f8a2f"/></svg>
<span class="val">4.000000</span>
<svg class="plug" width="17" height="16" viewBox="0 0 17 16"><rect x="0" y="0" width="1" height="16" fill="#5e5e5e"/><rect x="1" y="0" width="16" height="16" fill="#8b8b8b"/><path d="M1.7 16 L1.7 0.8 L17 0.8" fill="none" stroke="#d2d2d2" stroke-width="1.5"/><path d="M10.8 2.8 C6.6 3 4.6 5.6 4.6 8.6 C4.6 11.6 6.6 14.2 10.8 14.4 Z" fill="url(#gSock)"/><ellipse cx="11" cy="8.6" rx="2.7" ry="5.5" fill="#a0a0a0" stroke="#2a2a2a" stroke-width="0.75"/><rect x="9.8" y="6.2" width="2.8" height="1.3" fill="#111"/><rect x="9.8" y="10" width="2.8" height="1.3" fill="#111"/><rect x="3.2" y="8.2" width="1.5" height="1.5" fill="#d8d8d8"/></svg>
</div>
<div class="row">
<span class="lab">Angle_Start</span>
<svg class="key" width="18" height="8" viewBox="0 0 18 8"><path d="M0.6 2.5 L4.6 2.3 L4.8 3 L10 2.7 L10.2 4.4 L4.9 4.8 L4.6 5.9 L0.8 6 Z" fill="#d6d6d6" stroke="#3a3a3a" stroke-width="0.8" stroke-linejoin="round"/><ellipse cx="13.4" cy="3.9" rx="3.7" ry="2.7" transform="rotate(-14 13.4 3.9)" fill="#d6d6d6" stroke="#3a3a3a" stroke-width="0.9"/><ellipse cx="13.6" cy="3.9" rx="1.7" ry="1.1" transform="rotate(-14 13.6 3.9)" fill="#6a6a6a"/></svg>
<span class="val">0.000000</span>
<svg class="plug" width="17" height="16" viewBox="0 0 17 16"><rect x="0" y="0" width="1" height="16" fill="#5e5e5e"/><rect x="1" y="0" width="16" height="16" fill="#8b8b8b"/><path d="M1.7 16 L1.7 0.8 L17 0.8" fill="none" stroke="#d2d2d2" stroke-width="1.5"/><path d="M10.8 2.8 C6.6 3 4.6 5.6 4.6 8.6 C4.6 11.6 6.6 14.2 10.8 14.4 Z" fill="url(#gSock)"/><ellipse cx="11" cy="8.6" rx="2.7" ry="5.5" fill="#a0a0a0" stroke="#2a2a2a" stroke-width="0.75"/><rect x="9.8" y="6.2" width="2.8" height="1.3" fill="#111"/><rect x="9.8" y="10" width="2.8" height="1.3" fill="#111"/><rect x="3.2" y="8.2" width="1.5" height="1.5" fill="#d8d8d8"/></svg>
</div>
<div class="row">
<span class="lab">Angle_End</span>
<svg class="key" width="18" height="8" viewBox="0 0 18 8"><path d="M0.6 2.5 L4.6 2.3 L4.8 3 L10 2.7 L10.2 4.4 L4.9 4.8 L4.6 5.9 L0.8 6 Z" fill="#d6d6d6" stroke="#3a3a3a" stroke-width="0.8" stroke-linejoin="round"/><ellipse cx="13.4" cy="3.9" rx="3.7" ry="2.7" transform="rotate(-14 13.4 3.9)" fill="#d6d6d6" stroke="#3a3a3a" stroke-width="0.9"/><ellipse cx="13.6" cy="3.9" rx="1.7" ry="1.1" transform="rotate(-14 13.6 3.9)" fill="#6a6a6a"/></svg>
<span class="val">90.000000</span>
<svg class="plug" width="17" height="16" viewBox="0 0 17 16"><rect x="0" y="0" width="1" height="16" fill="#5e5e5e"/><rect x="1" y="0" width="16" height="16" fill="#8b8b8b"/><path d="M1.7 16 L1.7 0.8 L17 0.8" fill="none" stroke="#d2d2d2" stroke-width="1.5"/><path d="M10.8 2.8 C6.6 3 4.6 5.6 4.6 8.6 C4.6 11.6 6.6 14.2 10.8 14.4 Z" fill="url(#gSock)"/><ellipse cx="11" cy="8.6" rx="2.7" ry="5.5" fill="#a0a0a0" stroke="#2a2a2a" stroke-width="0.75"/><rect x="9.8" y="6.2" width="2.8" height="1.3" fill="#111"/><rect x="9.8" y="10" width="2.8" height="1.3" fill="#111"/><rect x="3.2" y="8.2" width="1.5" height="1.5" fill="#d8d8d8"/></svg>
</div>
<div class="row">
<span class="lab">Angle_Expo</span>
<svg class="key" width="18" height="8" viewBox="0 0 18 8"><path d="M0.6 2.5 L4.6 2.3 L4.8 3 L10 2.7 L10.2 4.4 L4.9 4.8 L4.6 5.9 L0.8 6 Z" fill="#d6d6d6" stroke="#3a3a3a" stroke-width="0.8" stroke-linejoin="round"/><ellipse cx="13.4" cy="3.9" rx="3.7" ry="2.7" transform="rotate(-14 13.4 3.9)" fill="#d6d6d6" stroke="#3a3a3a" stroke-width="0.9"/><ellipse cx="13.6" cy="3.9" rx="1.7" ry="1.1" transform="rotate(-14 13.6 3.9)" fill="#6a6a6a"/></svg>
<span class="val">1.000000</span>
<svg class="plug" width="17" height="16" viewBox="0 0 17 16"><rect x="0" y="0" width="1" height="16" fill="#5e5e5e"/><rect x="1" y="0" width="16" height="16" fill="#8b8b8b"/><path d="M1.7 16 L1.7 0.8 L17 0.8" fill="none" stroke="#d2d2d2" stroke-width="1.5"/><path d="M10.8 2.8 C6.6 3 4.6 5.6 4.6 8.6 C4.6 11.6 6.6 14.2 10.8 14.4 Z" fill="url(#gSock)"/><ellipse cx="11" cy="8.6" rx="2.7" ry="5.5" fill="#a0a0a0" stroke="#2a2a2a" stroke-width="0.75"/><rect x="9.8" y="6.2" width="2.8" height="1.3" fill="#111"/><rect x="9.8" y="10" width="2.8" height="1.3" fill="#111"/><rect x="3.2" y="8.2" width="1.5" height="1.5" fill="#d8d8d8"/></svg>
</div>
<div class="row">
<span class="lab">Diffuse</span>
<svg class="key" width="18" height="8" viewBox="0 0 18 8"><path d="M0.6 2.5 L4.6 2.3 L4.8 3 L10 2.7 L10.2 4.4 L4.9 4.8 L4.6 5.9 L0.8 6 Z" fill="#d6d6d6" stroke="#3a3a3a" stroke-width="0.8" stroke-linejoin="round"/><ellipse cx="13.4" cy="3.9" rx="3.7" ry="2.7" transform="rotate(-14 13.4 3.9)" fill="#d6d6d6" stroke="#3a3a3a" stroke-width="0.9"/><ellipse cx="13.6" cy="3.9" rx="1.7" ry="1.1" transform="rotate(-14 13.6 3.9)" fill="#6a6a6a"/></svg>
<span class="sw" style="background:#ffffff"></span>
<svg class="plug" width="17" height="16" viewBox="0 0 17 16"><rect x="0" y="0" width="1" height="16" fill="#5e5e5e"/><rect x="1" y="0" width="16" height="16" fill="#8b8b8b"/><path d="M1.7 16 L1.7 0.8 L17 0.8" fill="none" stroke="#d2d2d2" stroke-width="1.5"/><rect x="3.2" y="8.4" width="1.5" height="1.7" fill="#d8d8d8"/><rect x="13.6" y="8.2" width="3" height="2" fill="#c4c4c4"/><circle cx="9.3" cy="9" r="5.4" fill="url(#gBall)"/><path d="M9.8 3.4 C7.4 6 7.2 11 9 14.2" fill="none" stroke="#1fbcae" stroke-width="1.1"/></svg>
</div>
<div class="row">
<span class="lab">Specular</span>
<svg class="key" width="18" height="8" viewBox="0 0 18 8"><path d="M0.6 2.5 L4.6 2.3 L4.8 3 L10 2.7 L10.2 4.4 L4.9 4.8 L4.6 5.9 L0.8 6 Z" fill="#d6d6d6" stroke="#3a3a3a" stroke-width="0.8" stroke-linejoin="round"/><ellipse cx="13.4" cy="3.9" rx="3.7" ry="2.7" transform="rotate(-14 13.4 3.9)" fill="#d6d6d6" stroke="#3a3a3a" stroke-width="0.9"/><ellipse cx="13.6" cy="3.9" rx="1.7" ry="1.1" transform="rotate(-14 13.6 3.9)" fill="#6a6a6a"/></svg>
<span class="sw" style="background:#ffffff"></span>
<svg class="plug" width="17" height="16" viewBox="0 0 17 16"><rect x="0" y="0" width="1" height="16" fill="#5e5e5e"/><rect x="1" y="0" width="16" height="16" fill="#8b8b8b"/><path d="M1.7 16 L1.7 0.8 L17 0.8" fill="none" stroke="#d2d2d2" stroke-width="1.5"/><rect x="3.2" y="8.4" width="1.5" height="1.7" fill="#d8d8d8"/><rect x="13.6" y="8.2" width="3" height="2" fill="#c4c4c4"/><circle cx="9.3" cy="9" r="5.4" fill="url(#gBall)"/><path d="M9.8 3.4 C7.4 6 7.2 11 9 14.2" fill="none" stroke="#1fbcae" stroke-width="1.1"/></svg>
</div>
<div class="row">
<span class="lab">Image_Resolution</span>
<svg class="key" width="18" height="8" viewBox="0 0 18 8"><path d="M0.6 2.5 L4.6 2.3 L4.8 3 L10 2.7 L10.2 4.4 L4.9 4.8 L4.6 5.9 L0.8 6 Z" fill="#d6d6d6" stroke="#3a3a3a" stroke-width="0.8" stroke-linejoin="round"/><ellipse cx="13.4" cy="3.9" rx="3.7" ry="2.7" transform="rotate(-14 13.4 3.9)" fill="#d6d6d6" stroke="#3a3a3a" stroke-width="0.9"/><ellipse cx="13.6" cy="3.9" rx="1.7" ry="1.1" transform="rotate(-14 13.6 3.9)" fill="#6a6a6a"/></svg>
<span class="val">256</span>
<svg class="plug" width="17" height="16" viewBox="0 0 17 16"><rect x="0" y="0" width="1" height="16" fill="#5e5e5e"/><rect x="1" y="0" width="16" height="16" fill="#8b8b8b"/><path d="M1.7 16 L1.7 0.8 L17 0.8" fill="none" stroke="#d2d2d2" stroke-width="1.5"/><path d="M10.8 2.8 C6.6 3 4.6 5.6 4.6 8.6 C4.6 11.6 6.6 14.2 10.8 14.4 Z" fill="url(#gSock)"/><ellipse cx="11" cy="8.6" rx="2.7" ry="5.5" fill="#a0a0a0" stroke="#2a2a2a" stroke-width="0.75"/><rect x="9.8" y="6.2" width="2.8" height="1.3" fill="#111"/><rect x="9.8" y="10" width="2.8" height="1.3" fill="#111"/><rect x="3.2" y="8.2" width="1.5" height="1.5" fill="#d8d8d8"/></svg>
</div>
<div class="row">
<span class="lab">IBL Contrast</span>
<svg class="key" width="18" height="8" viewBox="0 0 18 8"><path d="M0.6 2.5 L4.6 2.3 L4.8 3 L10 2.7 L10.2 4.4 L4.9 4.8 L4.6 5.9 L0.8 6 Z" fill="#d6d6d6" stroke="#3a3a3a" stroke-width="0.8" stroke-linejoin="round"/><ellipse cx="13.4" cy="3.9" rx="3.7" ry="2.7" transform="rotate(-14 13.4 3.9)" fill="#d6d6d6" stroke="#3a3a3a" stroke-width="0.9"/><ellipse cx="13.6" cy="3.9" rx="1.7" ry="1.1" transform="rotate(-14 13.6 3.9)" fill="#6a6a6a"/></svg>
<span class="val">3.000000</span>
<svg class="plug" width="17" height="16" viewBox="0 0 17 16"><rect x="0" y="0" width="1" height="16" fill="#5e5e5e"/><rect x="1" y="0" width="16" height="16" fill="#8b8b8b"/><path d="M1.7 16 L1.7 0.8 L17 0.8" fill="none" stroke="#d2d2d2" stroke-width="1.5"/><path d="M10.8 2.8 C6.6 3 4.6 5.6 4.6 8.6 C4.6 11.6 6.6 14.2 10.8 14.4 Z" fill="url(#gSock)"/><ellipse cx="11" cy="8.6" rx="2.7" ry="5.5" fill="#a0a0a0" stroke="#2a2a2a" stroke-width="0.75"/><rect x="9.8" y="6.2" width="2.8" height="1.3" fill="#111"/><rect x="9.8" y="10" width="2.8" height="1.3" fill="#111"/><rect x="3.2" y="8.2" width="1.5" height="1.5" fill="#d8d8d8"/></svg>
</div>
</div>
<div class="node tile" style="left:791px;top:63px;width:203px">
<div class="ntitle"><span class="ticon"><svg width="19" height="18" viewBox="0 0 20 19.5" style="position:absolute;left:0;top:0.5px"><path d="M3.2 6.4 L10 9.8 M2.6 9.8 L9 13" stroke="#3a3a3a" stroke-width="1.3"/><path d="M11.4 3.4 C15.6 5.4 16.6 11.6 12.4 15.4 C9.4 14.6 8 12.6 8.6 9.6 C9 7 10 5 11.4 3.4 Z" fill="#262626"/><path d="M11.6 4.4 C14 7 14 12 11.6 14.6" stroke="#8a8a8a" stroke-width="0.8" fill="none"/><path d="M15 12 L18.6 14.8" stroke="#d0d0d0" stroke-width="1"/></svg></span><span class="nt">Tile</span><span class="btn list"><svg width="9" height="11" viewBox="0 0 9 11"><rect width="9" height="11" fill="#333"/><path d="M1 3.6H8M1 5.6H8M1 7.6H8M1 9.6H8" stroke="#a4a4a4" stroke-width="1"/></svg></span><span class="btn eye"><svg width="13" height="13" viewBox="0 0 14 14"><path d="M1.2 4.8 C4 2.2 9.6 2 12.8 4.6" fill="none" stroke="#3c3c3c" stroke-width="1.6"/><path d="M2.2 8.6 C4.6 5.8 9.8 5.6 12.2 8.2 C9.8 10.8 4.6 11 2.2 8.6 Z" fill="#a8a8a8" stroke="#4a4a4a" stroke-width="0.7"/><ellipse cx="7.6" cy="8.2" rx="2.4" ry="2" fill="#1e1e1e"/><circle cx="8.6" cy="8" r="0.8" fill="#e8e8e8"/></svg></span></div>
<div class="row">
<span class="lab">Tile_1</span>
<svg class="key" width="18" height="8" viewBox="0 0 18 8"><path d="M0.6 2.5 L4.6 2.3 L4.8 3 L10 2.7 L10.2 4.4 L4.9 4.8 L4.6 5.9 L0.8 6 Z" fill="#d6d6d6" stroke="#3a3a3a" stroke-width="0.8" stroke-linejoin="round"/><ellipse cx="13.4" cy="3.9" rx="3.7" ry="2.7" transform="rotate(-14 13.4 3.9)" fill="#d6d6d6" stroke="#3a3a3a" stroke-width="0.9"/><ellipse cx="13.6" cy="3.9" rx="1.7" ry="1.1" transform="rotate(-14 13.6 3.9)" fill="#6a6a6a"/></svg>
<span class="sw" style="background:#000000"></span>
<svg class="plug" width="17" height="16" viewBox="0 0 17 16"><rect x="0" y="0" width="1" height="16" fill="#5e5e5e"/><rect x="1" y="0" width="16" height="16" fill="#8b8b8b"/><path d="M1.7 16 L1.7 0.8 L17 0.8" fill="none" stroke="#d2d2d2" stroke-width="1.5"/><path d="M10.8 2.8 C6.6 3 4.6 5.6 4.6 8.6 C4.6 11.6 6.6 14.2 10.8 14.4 Z" fill="url(#gSock)"/><ellipse cx="11" cy="8.6" rx="2.7" ry="5.5" fill="#a0a0a0" stroke="#2a2a2a" stroke-width="0.75"/><rect x="9.8" y="6.2" width="2.8" height="1.3" fill="#111"/><rect x="9.8" y="10" width="2.8" height="1.3" fill="#111"/><rect x="3.2" y="8.2" width="1.5" height="1.5" fill="#d8d8d8"/></svg>
</div>
<div class="row">
<span class="lab">Tile_Shape_1</span>
<span class="dd"><b class="tri"></b>Rectangular</span>
</div>
<div class="row">
<span class="lab">Tile_2</span>
<svg class="key" width="18" height="8" viewBox="0 0 18 8"><path d="M0.6 2.5 L4.6 2.3 L4.8 3 L10 2.7 L10.2 4.4 L4.9 4.8 L4.6 5.9 L0.8 6 Z" fill="#d6d6d6" stroke="#3a3a3a" stroke-width="0.8" stroke-linejoin="round"/><ellipse cx="13.4" cy="3.9" rx="3.7" ry="2.7" transform="rotate(-14 13.4 3.9)" fill="#d6d6d6" stroke="#3a3a3a" stroke-width="0.9"/><ellipse cx="13.6" cy="3.9" rx="1.7" ry="1.1" transform="rotate(-14 13.6 3.9)" fill="#6a6a6a"/></svg>
<span class="sw" style="background:#000000"></span>
<svg class="plug" width="17" height="16" viewBox="0 0 17 16"><rect x="0" y="0" width="1" height="16" fill="#5e5e5e"/><rect x="1" y="0" width="16" height="16" fill="#8b8b8b"/><path d="M1.7 16 L1.7 0.8 L17 0.8" fill="none" stroke="#d2d2d2" stroke-width="1.5"/><path d="M10.8 2.8 C6.6 3 4.6 5.6 4.6 8.6 C4.6 11.6 6.6 14.2 10.8 14.4 Z" fill="url(#gSock)"/><ellipse cx="11" cy="8.6" rx="2.7" ry="5.5" fill="#a0a0a0" stroke="#2a2a2a" stroke-width="0.75"/><rect x="9.8" y="6.2" width="2.8" height="1.3" fill="#111"/><rect x="9.8" y="10" width="2.8" height="1.3" fill="#111"/><rect x="3.2" y="8.2" width="1.5" height="1.5" fill="#d8d8d8"/></svg>
</div>
<div class="row">
<span class="lab">Tile_Shape_2</span>
<span class="dd"><b class="tri"></b>Rectangular</span>
</div>
<div class="row">
<span class="lab">Mortar_Color</span>
<svg class="key" width="18" height="8" viewBox="0 0 18 8"><path d="M0.6 2.5 L4.6 2.3 L4.8 3 L10 2.7 L10.2 4.4 L4.9 4.8 L4.6 5.9 L0.8 6 Z" fill="#d6d6d6" stroke="#3a3a3a" stroke-width="0.8" stroke-linejoin="round"/><ellipse cx="13.4" cy="3.9" rx="3.7" ry="2.7" transform="rotate(-14 13.4 3.9)" fill="#d6d6d6" stroke="#3a3a3a" stroke-width="0.9"/><ellipse cx="13.6" cy="3.9" rx="1.7" ry="1.1" transform="rotate(-14 13.6 3.9)" fill="#6a6a6a"/></svg>
<span class="sw" style="background:#ffffff"></span>
<svg class="plug" width="17" height="16" viewBox="0 0 17 16"><rect x="0" y="0" width="1" height="16" fill="#5e5e5e"/><rect x="1" y="0" width="16" height="16" fill="#8b8b8b"/><path d="M1.7 16 L1.7 0.8 L17 0.8" fill="none" stroke="#d2d2d2" stroke-width="1.5"/><path d="M10.8 2.8 C6.6 3 4.6 5.6 4.6 8.6 C4.6 11.6 6.6 14.2 10.8 14.4 Z" fill="url(#gSock)"/><ellipse cx="11" cy="8.6" rx="2.7" ry="5.5" fill="#a0a0a0" stroke="#2a2a2a" stroke-width="0.75"/><rect x="9.8" y="6.2" width="2.8" height="1.3" fill="#111"/><rect x="9.8" y="10" width="2.8" height="1.3" fill="#111"/><rect x="3.2" y="8.2" width="1.5" height="1.5" fill="#d8d8d8"/></svg>
</div>
<div class="row">
<span class="lab">Tile_Width</span>
<svg class="key" width="18" height="8" viewBox="0 0 18 8"><path d="M0.6 2.5 L4.6 2.3 L4.8 3 L10 2.7 L10.2 4.4 L4.9 4.8 L4.6 5.9 L0.8 6 Z" fill="#d6d6d6" stroke="#3a3a3a" stroke-width="0.8" stroke-linejoin="round"/><ellipse cx="13.4" cy="3.9" rx="3.7" ry="2.7" transform="rotate(-14 13.4 3.9)" fill="#d6d6d6" stroke="#3a3a3a" stroke-width="0.9"/><ellipse cx="13.6" cy="3.9" rx="1.7" ry="1.1" transform="rotate(-14 13.6 3.9)" fill="#6a6a6a"/></svg>
<span class="val">1.1</span>
<svg class="plug" width="17" height="16" viewBox="0 0 17 16"><rect x="0" y="0" width="1" height="16" fill="#5e5e5e"/><rect x="1" y="0" width="16" height="16" fill="#8b8b8b"/><path d="M1.7 16 L1.7 0.8 L17 0.8" fill="none" stroke="#d2d2d2" stroke-width="1.5"/><path d="M10.8 2.8 C6.6 3 4.6 5.6 4.6 8.6 C4.6 11.6 6.6 14.2 10.8 14.4 Z" fill="url(#gSock)"/><ellipse cx="11" cy="8.6" rx="2.7" ry="5.5" fill="#a0a0a0" stroke="#2a2a2a" stroke-width="0.75"/><rect x="9.8" y="6.2" width="2.8" height="1.3" fill="#111"/><rect x="9.8" y="10" width="2.8" height="1.3" fill="#111"/><rect x="3.2" y="8.2" width="1.5" height="1.5" fill="#d8d8d8"/></svg>
</div>
<div class="row">
<span class="lab">Tile_Height</span>
<svg class="key" width="18" height="8" viewBox="0 0 18 8"><path d="M0.6 2.5 L4.6 2.3 L4.8 3 L10 2.7 L10.2 4.4 L4.9 4.8 L4.6 5.9 L0.8 6 Z" fill="#d6d6d6" stroke="#3a3a3a" stroke-width="0.8" stroke-linejoin="round"/><ellipse cx="13.4" cy="3.9" rx="3.7" ry="2.7" transform="rotate(-14 13.4 3.9)" fill="#d6d6d6" stroke="#3a3a3a" stroke-width="0.9"/><ellipse cx="13.6" cy="3.9" rx="1.7" ry="1.1" transform="rotate(-14 13.6 3.9)" fill="#6a6a6a"/></svg>
<span class="val">.5</span>
<svg class="plug" width="17" height="16" viewBox="0 0 17 16"><rect x="0" y="0" width="1" height="16" fill="#5e5e5e"/><rect x="1" y="0" width="16" height="16" fill="#8b8b8b"/><path d="M1.7 16 L1.7 0.8 L17 0.8" fill="none" stroke="#d2d2d2" stroke-width="1.5"/><path d="M10.8 2.8 C6.6 3 4.6 5.6 4.6 8.6 C4.6 11.6 6.6 14.2 10.8 14.4 Z" fill="url(#gSock)"/><ellipse cx="11" cy="8.6" rx="2.7" ry="5.5" fill="#a0a0a0" stroke="#2a2a2a" stroke-width="0.75"/><rect x="9.8" y="6.2" width="2.8" height="1.3" fill="#111"/><rect x="9.8" y="10" width="2.8" height="1.3" fill="#111"/><rect x="3.2" y="8.2" width="1.5" height="1.5" fill="#d8d8d8"/></svg>
</div>
<div class="row">
<span class="lab">Mortar_Thickness</span>
<svg class="key" width="18" height="8" viewBox="0 0 18 8"><path d="M0.6 2.5 L4.6 2.3 L4.8 3 L10 2.7 L10.2 4.4 L4.9 4.8 L4.6 5.9 L0.8 6 Z" fill="#d6d6d6" stroke="#3a3a3a" stroke-width="0.8" stroke-linejoin="round"/><ellipse cx="13.4" cy="3.9" rx="3.7" ry="2.7" transform="rotate(-14 13.4 3.9)" fill="#d6d6d6" stroke="#3a3a3a" stroke-width="0.9"/><ellipse cx="13.6" cy="3.9" rx="1.7" ry="1.1" transform="rotate(-14 13.6 3.9)" fill="#6a6a6a"/></svg>
<span class="val">.001</span>
<svg class="plug" width="17" height="16" viewBox="0 0 17 16"><rect x="0" y="0" width="1" height="16" fill="#5e5e5e"/><rect x="1" y="0" width="16" height="16" fill="#8b8b8b"/><path d="M1.7 16 L1.7 0.8 L17 0.8" fill="none" stroke="#d2d2d2" stroke-width="1.5"/><path d="M10.8 2.8 C6.6 3 4.6 5.6 4.6 8.6 C4.6 11.6 6.6 14.2 10.8 14.4 Z" fill="url(#gSock)"/><ellipse cx="11" cy="8.6" rx="2.7" ry="5.5" fill="#a0a0a0" stroke="#2a2a2a" stroke-width="0.75"/><rect x="9.8" y="6.2" width="2.8" height="1.3" fill="#111"/><rect x="9.8" y="10" width="2.8" height="1.3" fill="#111"/><rect x="3.2" y="8.2" width="1.5" height="1.5" fill="#d8d8d8"/></svg>
</div>
<div class="row">
<span class="lab">Turbulence</span>
<svg class="key" width="18" height="8" viewBox="0 0 18 8"><path d="M0.6 2.5 L4.6 2.3 L4.8 3 L10 2.7 L10.2 4.4 L4.9 4.8 L4.6 5.9 L0.8 6 Z" fill="#d6d6d6" stroke="#3a3a3a" stroke-width="0.8" stroke-linejoin="round"/><ellipse cx="13.4" cy="3.9" rx="3.7" ry="2.7" transform="rotate(-14 13.4 3.9)" fill="#d6d6d6" stroke="#3a3a3a" stroke-width="0.9"/><ellipse cx="13.6" cy="3.9" rx="1.7" ry="1.1" transform="rotate(-14 13.6 3.9)" fill="#6a6a6a"/></svg>
<span class="val">0.000000</span>
<svg class="plug" width="17" height="16" viewBox="0 0 17 16"><rect x="0" y="0" width="1" height="16" fill="#5e5e5e"/><rect x="1" y="0" width="16" height="16" fill="#8b8b8b"/><path d="M1.7 16 L1.7 0.8 L17 0.8" fill="none" stroke="#d2d2d2" stroke-width="1.5"/><path d="M10.8 2.8 C6.6 3 4.6 5.6 4.6 8.6 C4.6 11.6 6.6 14.2 10.8 14.4 Z" fill="url(#gSock)"/><ellipse cx="11" cy="8.6" rx="2.7" ry="5.5" fill="#a0a0a0" stroke="#2a2a2a" stroke-width="0.75"/><rect x="9.8" y="6.2" width="2.8" height="1.3" fill="#111"/><rect x="9.8" y="10" width="2.8" height="1.3" fill="#111"/><rect x="3.2" y="8.2" width="1.5" height="1.5" fill="#d8d8d8"/></svg>
</div>
<div class="row">
<span class="lab">Softness</span>
<svg class="key" width="18" height="8" viewBox="0 0 18 8"><path d="M0.6 2.5 L4.6 2.3 L4.8 3 L10 2.7 L10.2 4.4 L4.9 4.8 L4.6 5.9 L0.8 6 Z" fill="#d6d6d6" stroke="#3a3a3a" stroke-width="0.8" stroke-linejoin="round"/><ellipse cx="13.4" cy="3.9" rx="3.7" ry="2.7" transform="rotate(-14 13.4 3.9)" fill="#d6d6d6" stroke="#3a3a3a" stroke-width="0.9"/><ellipse cx="13.6" cy="3.9" rx="1.7" ry="1.1" transform="rotate(-14 13.6 3.9)" fill="#6a6a6a"/></svg>
<span class="val">0.030000</span>
<svg class="plug" width="17" height="16" viewBox="0 0 17 16"><rect x="0" y="0" width="1" height="16" fill="#5e5e5e"/><rect x="1" y="0" width="16" height="16" fill="#8b8b8b"/><path d="M1.7 16 L1.7 0.8 L17 0.8" fill="none" stroke="#d2d2d2" stroke-width="1.5"/><path d="M10.8 2.8 C6.6 3 4.6 5.6 4.6 8.6 C4.6 11.6 6.6 14.2 10.8 14.4 Z" fill="url(#gSock)"/><ellipse cx="11" cy="8.6" rx="2.7" ry="5.5" fill="#a0a0a0" stroke="#2a2a2a" stroke-width="0.75"/><rect x="9.8" y="6.2" width="2.8" height="1.3" fill="#111"/><rect x="9.8" y="10" width="2.8" height="1.3" fill="#111"/><rect x="3.2" y="8.2" width="1.5" height="1.5" fill="#d8d8d8"/></svg>
</div>
<div class="row">
<span class="lab">Noise</span>
<svg class="key" width="18" height="8" viewBox="0 0 18 8"><path d="M0.6 2.5 L4.6 2.3 L4.8 3 L10 2.7 L10.2 4.4 L4.9 4.8 L4.6 5.9 L0.8 6 Z" fill="#d6d6d6" stroke="#3a3a3a" stroke-width="0.8" stroke-linejoin="round"/><ellipse cx="13.4" cy="3.9" rx="3.7" ry="2.7" transform="rotate(-14 13.4 3.9)" fill="#d6d6d6" stroke="#3a3a3a" stroke-width="0.9"/><ellipse cx="13.6" cy="3.9" rx="1.7" ry="1.1" transform="rotate(-14 13.6 3.9)" fill="#6a6a6a"/></svg>
<span class="val">0.000000</span>
<svg class="plug" width="17" height="16" viewBox="0 0 17 16"><rect x="0" y="0" width="1" height="16" fill="#5e5e5e"/><rect x="1" y="0" width="16" height="16" fill="#8b8b8b"/><path d="M1.7 16 L1.7 0.8 L17 0.8" fill="none" stroke="#d2d2d2" stroke-width="1.5"/><path d="M10.8 2.8 C6.6 3 4.6 5.6 4.6 8.6 C4.6 11.6 6.6 14.2 10.8 14.4 Z" fill="url(#gSock)"/><ellipse cx="11" cy="8.6" rx="2.7" ry="5.5" fill="#a0a0a0" stroke="#2a2a2a" stroke-width="0.75"/><rect x="9.8" y="6.2" width="2.8" height="1.3" fill="#111"/><rect x="9.8" y="10" width="2.8" height="1.3" fill="#111"/><rect x="3.2" y="8.2" width="1.5" height="1.5" fill="#d8d8d8"/></svg>
</div>
<div class="row">
<span class="lab">U_Offset</span>
<svg class="key" width="18" height="8" viewBox="0 0 18 8"><path d="M0.6 2.5 L4.6 2.3 L4.8 3 L10 2.7 L10.2 4.4 L4.9 4.8 L4.6 5.9 L0.8 6 Z" fill="#d6d6d6" stroke="#3a3a3a" stroke-width="0.8" stroke-linejoin="round"/><ellipse cx="13.4" cy="3.9" rx="3.7" ry="2.7" transform="rotate(-14 13.4 3.9)" fill="#d6d6d6" stroke="#3a3a3a" stroke-width="0.9"/><ellipse cx="13.6" cy="3.9" rx="1.7" ry="1.1" transform="rotate(-14 13.6 3.9)" fill="#6a6a6a"/></svg>
<span class="val">-.05</span>
<svg class="plug" width="17" height="16" viewBox="0 0 17 16"><rect x="0" y="0" width="1" height="16" fill="#5e5e5e"/><rect x="1" y="0" width="16" height="16" fill="#8b8b8b"/><path d="M1.7 16 L1.7 0.8 L17 0.8" fill="none" stroke="#d2d2d2" stroke-width="1.5"/><path d="M10.8 2.8 C6.6 3 4.6 5.6 4.6 8.6 C4.6 11.6 6.6 14.2 10.8 14.4 Z" fill="url(#gSock)"/><ellipse cx="11" cy="8.6" rx="2.7" ry="5.5" fill="#a0a0a0" stroke="#2a2a2a" stroke-width="0.75"/><rect x="9.8" y="6.2" width="2.8" height="1.3" fill="#111"/><rect x="9.8" y="10" width="2.8" height="1.3" fill="#111"/><rect x="3.2" y="8.2" width="1.5" height="1.5" fill="#d8d8d8"/></svg>
</div>
<div class="row">
<span class="lab">V_Offset</span>
<svg class="key" width="18" height="8" viewBox="0 0 18 8"><path d="M0.6 2.5 L4.6 2.3 L4.8 3 L10 2.7 L10.2 4.4 L4.9 4.8 L4.6 5.9 L0.8 6 Z" fill="#d6d6d6" stroke="#3a3a3a" stroke-width="0.8" stroke-linejoin="round"/><ellipse cx="13.4" cy="3.9" rx="3.7" ry="2.7" transform="rotate(-14 13.4 3.9)" fill="#d6d6d6" stroke="#3a3a3a" stroke-width="0.9"/><ellipse cx="13.6" cy="3.9" rx="1.7" ry="1.1" transform="rotate(-14 13.6 3.9)" fill="#6a6a6a"/></svg>
<span class="val">0.000000</span>
<svg class="plug" width="17" height="16" viewBox="0 0 17 16"><rect x="0" y="0" width="1" height="16" fill="#5e5e5e"/><rect x="1" y="0" width="16" height="16" fill="#8b8b8b"/><path d="M1.7 16 L1.7 0.8 L17 0.8" fill="none" stroke="#d2d2d2" stroke-width="1.5"/><path d="M10.8 2.8 C6.6 3 4.6 5.6 4.6 8.6 C4.6 11.6 6.6 14.2 10.8 14.4 Z" fill="url(#gSock)"/><ellipse cx="11" cy="8.6" rx="2.7" ry="5.5" fill="#a0a0a0" stroke="#2a2a2a" stroke-width="0.75"/><rect x="9.8" y="6.2" width="2.8" height="1.3" fill="#111"/><rect x="9.8" y="10" width="2.8" height="1.3" fill="#111"/><rect x="3.2" y="8.2" width="1.5" height="1.5" fill="#d8d8d8"/></svg>
</div>
<div class="row">
<span class="lab">Noise_Type</span>
<span class="dd"><b class="tri"></b>Original</span>
</div>
<div class="prev"><div class="wl"></div></div>
</div>
  </div>
</div>
</body></html>
